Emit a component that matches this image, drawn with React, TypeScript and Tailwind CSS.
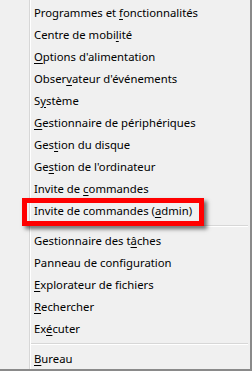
import React from 'react'

type Item = { pre: string; key: string; post: string; boxed?: boolean }

const group1: Item[] = [
  { pre: 'Programmes et ', key: 'f', post: 'onctionnalités' },
  { pre: 'Centre de mobi', key: 'l', post: 'ité' },
  { pre: '', key: 'O', post: "ptions d'alimentation" },
  { pre: 'Obser', key: 'v', post: "ateur d'événements" },
  { pre: 'S', key: 'y', post: 'stème' },
  { pre: '', key: 'G', post: 'estionnaire de périphériques' },
  { pre: 'Ges', key: 't', post: 'ion du disque' },
  { pre: 'Ge', key: 's', post: "tion de l'ordinateur" },
  { pre: 'Invite de ', key: 'c', post: 'ommandes' },
  { pre: 'Invite de commandes (', key: 'a', post: 'dmin)', boxed: true },
]

const group2: Item[] = [
  { pre: 'Gestionnaire des t', key: 'â', post: 'ches' },
  { pre: 'Panneau de confi', key: 'g', post: 'uration' },
  { pre: '', key: 'E', post: 'xplorateur de fichiers' },
  { pre: '', key: 'R', post: 'echercher' },
  { pre: 'Ex', key: 'é', post: 'cuter' },
]

const group3: Item[] = [{ pre: '', key: 'B', post: 'ureau' }]

function MenuItem({ item }: { item: Item }) {
  return (
    <div className="relative h-[22px] pl-[3px] flex items-center whitespace-nowrap">
      {item.boxed && (
        <div className="absolute left-[-9px] top-[-2px] w-[182px] h-[28px] border-[5px] border-[#ff0000] shadow-[3px_3px_4px_rgba(0,0,0,0.55)]" />
      )}
      <span className="relative">
        {item.pre}
        <span className="underline underline-offset-2">{item.key}</span>
        {item.post}
      </span>
    </div>
  )
}

function Separator() {
  return (
    <div className="h-[8px] pt-[3px] pr-[2px]">
      <div className="h-[1px] bg-[#d7d7d7]" />
      <div className="h-[1px] bg-white" />
    </div>
  )
}

export default function App() {
  return (
    <div
      className="w-[252px] h-[371px] bg-[#f0f0f0] flex border-r-2 border-b-2 border-[#8a8a8a] text-[11.3px] text-black overflow-hidden"
      style={{ fontFamily: '"Noto Sans", "Open Sans", sans-serif' }}
    >
      <div className="w-[29px] shrink-0" />
      <div className="w-[1px] bg-[#d7d7d7]" />
      <div className="w-[1px] bg-white" />
      <div className="flex-1 pt-[2px]">
        {group1.map(i => <MenuItem key={i.pre + i.key + i.post} item={i} />)}
        <Separator />
        {group2.map(i => <MenuItem key={i.pre + i.key + i.post} item={i} />)}
        <Separator />
        {group3.map(i => <MenuItem key={i.pre + i.key + i.post} item={i} />)}
      </div>
    </div>
  )
}
